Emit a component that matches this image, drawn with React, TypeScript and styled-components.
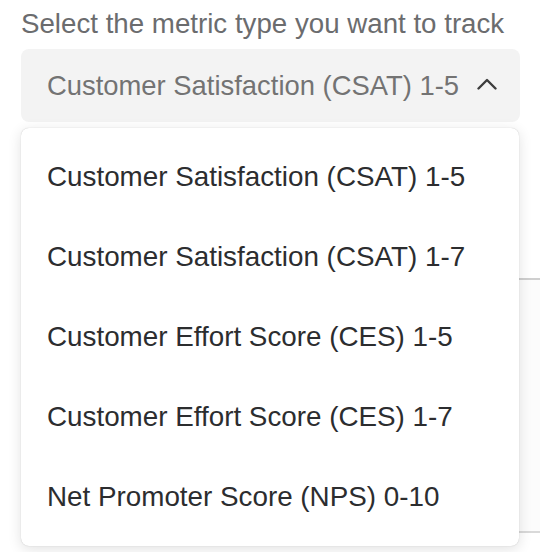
import React from "react";
import styled, { createGlobalStyle } from "styled-components";

const GlobalStyle = createGlobalStyle`
  html, body {
    margin: 0;
    padding: 0;
    background: #ffffff;
  }
  body {
    font-family: "Liberation Sans", Arial, Helvetica, sans-serif;
    overflow: hidden;
  }
`;

const options = [
  "Customer Satisfaction (CSAT) 1-5",
  "Customer Satisfaction (CSAT) 1-7",
  "Customer Effort Score (CES) 1-5",
  "Customer Effort Score (CES) 1-7",
  "Net Promoter Score (NPS) 0-10",
];

export default function App() {
  return (
    <>
      <GlobalStyle />
      <Page>
        <Label>Select the metric type you want to track</Label>
        <Field>
          <Trigger type="button">
            <span>{options[0]}</span>
            <svg width="20" height="12" viewBox="0 0 20 12" fill="none">
              <path d="M1.5 10.5 L10 2 L18.5 10.5" stroke="#3d3d3d" strokeWidth="2.4" strokeLinecap="round" strokeLinejoin="round" />
            </svg>
          </Trigger>
          <Menu>
            {options.map((o) => (
              <Item key={o}>{o}</Item>
            ))}
          </Menu>
        </Field>
        <UnderCard />
      </Page>
    </>
  );
}

const Page = styled.div`
  width: 540px;
  height: 552px;
  padding: 8px 0 0 21px;
  box-sizing: border-box;
  display: flex;
  flex-direction: column;
`;

const Label = styled.div`
  font-size: 27.7px;
  line-height: 32px;
  color: #6b6c6e;
`;

const Field = styled.div`
  position: relative;
  margin-top: 9px;
  width: 499px;
`;

const Trigger = styled.button`
  display: flex;
  align-items: center;
  gap: 18px;
  width: 100%;
  height: 73px;
  padding: 0 0 0 26px;
  border: none;
  border-radius: 8px;
  background: #f3f3f3;
  font-family: inherit;
  font-size: 27.4px;
  color: #737373;
  text-align: left;

  svg {
    flex: none;
    margin-top: -4px;
  }
`;

const Menu = styled.ul`
  position: absolute;
  z-index: 2;
  top: 79px;
  left: 0;
  width: 498px;
  margin: 0;
  padding: 9px 0 9px;
  list-style: none;
  background: #ffffff;
  border-radius: 8px;
  box-shadow: 0 0 1px rgba(0, 0, 0, 0.25), 0 3px 14px rgba(0, 0, 0, 0.12);
`;

const Item = styled.li`
  height: 80px;
  display: flex;
  align-items: center;
  padding-left: 26px;
  font-size: 27.8px;
  color: #2c2d2f;
`;

const UnderCard = styled.div`
  margin-top: 156px;
  margin-left: 260px;
  height: 251px;
  border-top: 2px solid #cfcfcf;
  border-bottom: 2px solid #d9d9d9;
  background: #fcfcfc;
`;
